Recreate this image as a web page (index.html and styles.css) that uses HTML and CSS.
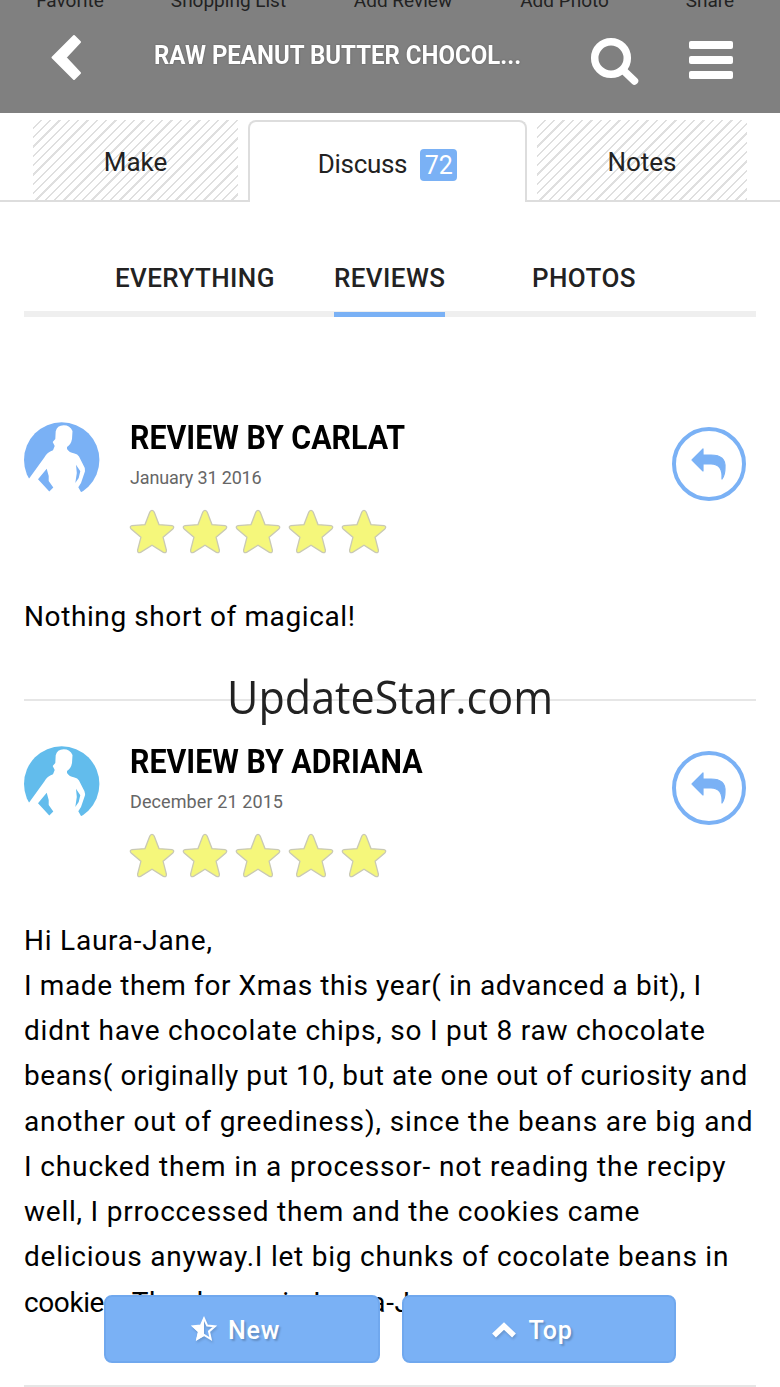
FILE: index.html
```
<!DOCTYPE html>
<html lang="en">
<head>
  <meta charset="UTF-8" />
  <title>Raw Peanut Butter Chocolate - Reviews</title>
  <meta name="viewport" content="width=device-width, initial-scale=1" />
  <link rel="stylesheet" href="styles.css">
</head>
<body>
  <svg width="0" height="0" class="defs">
    <defs>
      <symbol id="star" viewBox="0 0 46 46">
        <path d="M20.8 3.1Q23 -.3 25.2 3.1L30 15.6L43 16.7Q46 17.6 43.8 20L34.1 28.3L37.4 41.2Q37.5 44.6 34.4 43.4L23 36.3L11.6 43.4Q8.5 44.6 8.6 41.2L11.9 28.3L2.2 20Q0 17.6 3 16.7L16 15.6Z" fill="#f5f77b" stroke="#c9c9b4" stroke-width="1.3" />
      </symbol>
      <symbol id="person" viewBox="0 0 76 76">
        <circle cx="37.7" cy="38" r="37.7" />
        <path d="M39.7 3.3Q33 3.5 31.7 9.3L31.3 17L28.7 20L30.7 24L29 28.3Q23 30.5 20.5 35.3L5.5 56L0 62V76H76V70H57L54.3 65.3L57 61L61 49.3Q61.5 46 59.3 43L55 34.5Q53.5 32 50.5 31.5Q45 30.5 43 27L43 25Q47 22.5 48 17L48.5 9Q46 3.3 39.7 3.3Z" fill="#fff" />
        <path d="M14 57.3L22.7 46.7L24.7 54V59L29.3 65.5L25.3 69.5Z" />
        <path d="M52 42.7L56.3 49.3L54.7 56L51.3 61L52.8 51Z" />
      </symbol>
      <symbol id="reply" viewBox="0 0 36 32">
        <path d="M1 12L12 1V7H20Q35 7 34 20Q34 27 31 31Q32 16 20 16H12V23Z" stroke-width="1.2" stroke-linejoin="round" />
      </symbol>
    </defs>
  </svg>

  <div class="page">
    <header class="header">
      <div class="actions">
        <span>Favorite</span>
        <span>Shopping List</span>
        <span>Add Review</span>
        <span>Add Photo</span>
        <span>Share</span>
      </div>
      <div class="bar">
        <svg class="back" width="32" height="48" viewBox="0 0 32 48"><path d="M23 2L29 8L14.5 23.5L29 39L23 45L1.5 23.5Z" /></svg>
        <h1>RAW PEANUT BUTTER CHOCOL...</h1>
        <svg class="search" width="50" height="50" viewBox="0 0 50 50"><circle cx="21" cy="21" r="16.3" fill="none" stroke="#fff" stroke-width="7.5" /><path d="M33 33L44.5 44" stroke="#fff" stroke-width="7.5" stroke-linecap="round" /></svg>
        <div class="menu"><i></i><i></i><i></i></div>
      </div>
    </header>

    <nav class="tabs">
      <a class="tab make">Make</a>
      <a class="tab active"><span>Discuss</span><b class="badge">72</b></a>
      <a class="tab notes">Notes</a>
    </nav>

    <nav class="filters">
      <a class="everything">EVERYTHING</a>
      <a class="reviews selected">REVIEWS</a>
      <a class="photos">PHOTOS</a>
    </nav>

    <main>
      <article class="review">
        <div class="top">
          <svg class="avatar" fill="#7ab1f5"><use href="#person" /></svg>
          <div class="info">
            <h2>REVIEW BY CARLAT</h2>
            <time>January 31 2016</time>
            <div class="stars">
              <svg><use href="#star" /></svg><svg><use href="#star" /></svg><svg><use href="#star" /></svg><svg><use href="#star" /></svg><svg><use href="#star" /></svg>
            </div>
          </div>
          <button class="reply"><svg><use href="#reply" /></svg></button>
        </div>
        <p>Nothing short of magical!</p>
      </article>

      <article class="review">
        <div class="top">
          <svg class="avatar" fill="#62bcec"><use href="#person" /></svg>
          <div class="info">
            <h2>REVIEW BY ADRIANA</h2>
            <time class="long">December 21 2015</time>
            <div class="stars">
              <svg><use href="#star" /></svg><svg><use href="#star" /></svg><svg><use href="#star" /></svg><svg><use href="#star" /></svg><svg><use href="#star" /></svg>
            </div>
          </div>
          <button class="reply"><svg><use href="#reply" /></svg></button>
        </div>
        <p><span class="wide">Hi Laura-Jane,</span><br>
          I made them for Xmas this year( in advanced a bit), I<br>
          <span class="wide">didnt have chocolate chips, so I put 8 raw chocolate</span><br>
          beans( originally put 10, but ate one out of curiosity and<br>
          <span class="wider">another out of greediness), since the beans are big and</span><br>
          <span class="wider">I chucked them in a processor- not reading the recipy</span><br>
          <span class="wide">well, I prroccessed them and the cookies came</span><br>
          <span class="wide">delicious anyway.I let big chunks of cocolate beans in</span><br>
          <span class="tight">cookies. </span>Thanks again Laura-Jane</p>
      </article>
    </main>

    <div class="watermark">UpdateStar.com</div>

    <div class="floating">
      <button class="new"><svg width="26" height="26" viewBox="0 0 26 26"><path d="M13 2.5L16.2 9.6L23.8 10.3L18 15.4L19.7 23L13 19L6.3 23L8 15.4L2.2 10.3L9.8 9.6Z" fill="none" stroke="#fff" stroke-width="2" /><path d="M13 1V20L5 24.5L7 16L1 10L9.5 9.5Z" fill="#fff" /></svg>New</button>
      <button class="to-top"><svg width="26" height="18" viewBox="0 0 26 18"><path d="M3 14.5L13 5L23 14.5" fill="none" stroke="#fff" stroke-width="5.5" /></svg>Top</button>
    </div>
  </div>
</body>
</html>
```
FILE: styles.css
```
* {
  box-sizing: border-box;
}

body {
  margin: 0;
  font-family: Roboto, "Liberation Sans", sans-serif;
  background-color: #fff;
  color: #222;
}

.defs {
  position: absolute;
}

.page {
  position: relative;
  height: 1387px;
  overflow: hidden;
}

.header {
  height: 113px;
  background-color: #808080;
  overflow: hidden;
}

.actions {
  display: grid;
  grid-template-columns: 140px 177px 172px 151px 140px;
  height: 10px;
  text-align: center;
  font-size: 19px;
  line-height: 20px;
  white-space: nowrap;
}

.actions span {
  margin-top: -9px;
}

.bar {
  display: flex;
  align-items: flex-start;
  padding: 24px 47px 0 51px;
}

.back {
  fill: #fff;
  stroke: #fff;
  stroke-width: 2px;
  stroke-linejoin: round;
}

.bar h1 {
  width: 367px;
  margin: 5px 69px 0 71px;
  color: #fff;
  font-size: 26px;
  line-height: 32px;
  white-space: nowrap;
  transform-origin: left;
  transform: scaleX(0.923);
  text-shadow: 0 0 2px #555;
}

.search {
  margin-top: 3px;
}

.menu {
  display: flex;
  flex-direction: column;
  gap: 7px;
  margin: 7px 0 0 49px;
}

.menu i {
  width: 44px;
  height: 8px;
  border-radius: 2px;
  background-color: #fff;
}

.tabs {
  display: flex;
  height: 89px;
  padding: 7px 33px 0;
  background: linear-gradient(#ddd, #ddd) bottom / 100% 2px no-repeat;
}

.tab {
  display: flex;
  align-items: center;
  justify-content: center;
  height: 80px;
  font-size: 26px;
  padding-top: 4px;
}

.make,
.notes {
  background: repeating-linear-gradient(135deg, #fff 0 5.1px, #dfdfdf 5.1px 6.6px);
}

.make {
  width: 205px;
}

.notes {
  width: 210px;
}

.active {
  width: 279px;
  height: 82px;
  margin: 0 10px;
  border: 2px solid #ddd;
  border-bottom: 0;
  border-radius: 8px 8px 0 0;
  background-color: #fff;
  padding-top: 3px;
}

.active span {
  letter-spacing: -0.3px;
}

.badge {
  width: 37px;
  height: 32px;
  margin: 2px 0 0 13px;
  border-radius: 4px;
  background-color: #7ab1f5;
  color: #fff;
  font-size: 25px;
  font-weight: 400;
  line-height: 34px;
  text-align: center;
}

.filters {
  display: flex;
  margin: 55px 24px 0;
  height: 60px;
  padding-left: 91px;
  background: linear-gradient(#efefef, #efefef) bottom / 100% 6px no-repeat;
  font-size: 26px;
  font-weight: 500;
  line-height: 42px;
  letter-spacing: 0.4px;
}

.filters a {
  height: 60px;
  white-space: nowrap;
}

.everything {
  width: 160px;
}

.reviews {
  width: 111px;
  margin: 0 87px 0 59px;
}

.selected {
  border-bottom: 5px solid #7ab1f5;
}

main {
  padding: 60px 24px 0;
}

.review {
  padding: 45px 0 60.25px;
  border-bottom: 2px solid #e6e6e6;
}

.top {
  display: flex;
  height: 171.5px;
}

.avatar {
  width: 76px;
  height: 76px;
}

.info {
  flex: 1;
  margin-left: 30px;
}

.info h2 {
  margin: -1px 0 0;
  color: #000;
  font-size: 34px;
  line-height: 32px;
  white-space: nowrap;
  transform-origin: left;
  transform: scaleX(0.893);
}

.info time {
  display: block;
  margin-top: 14px;
  color: #666;
  font-size: 18px;
  line-height: 22px;
  letter-spacing: -0.15px;
}

.info .long {
  letter-spacing: 0.1px;
}

.stars {
  display: flex;
  gap: 7.2px;
  margin: 20px 0 0 -1.5px;
}

.stars svg {
  width: 46px;
  height: 46px;
}

.reply {
  display: flex;
  align-items: center;
  justify-content: center;
  width: 74px;
  height: 74px;
  margin: 5px 10px 0 0;
  padding: 0;
  border: 4px solid #7ab1f5;
  border-radius: 50%;
  background: none;
}

.reply svg {
  width: 36px;
  height: 32px;
  fill: #7ab1f5;
  stroke: #7ab1f5;
}

.review p {
  margin: 0;
  color: #000;
  font-size: 28px;
  line-height: 45.25px;
  letter-spacing: 0.6px;
  white-space: nowrap;
}

.review .wide {
  letter-spacing: 0.77px;
}

.review .wider {
  letter-spacing: 0.87px;
}

.review .tight {
  letter-spacing: -0.4px;
}

.watermark {
  position: absolute;
  left: 227px;
  top: 664px;
  font-family: "Open Sans", sans-serif;
  font-size: 46px;
  line-height: 64px;
  transform-origin: left;
  transform: scaleX(0.937);
}

.floating {
  position: absolute;
  left: 104px;
  top: 1295px;
  display: flex;
  gap: 22px;
}

.floating button {
  display: flex;
  align-items: center;
  justify-content: center;
  gap: 11px;
  height: 68px;
  padding: 2px 13px 0 0;
  border: 2px solid #70a8ee;
  border-radius: 8px;
  background-color: #7ab1f5;
  color: #fff;
  font-family: inherit;
  font-size: 25px;
  font-weight: 500;
  letter-spacing: 0.8px;
  text-shadow: 2px 2px 2px rgba(0,0,0,0.2);
}

.floating svg {
  margin-bottom: 3px;
  filter: drop-shadow(1px 2px 1px rgba(0,0,0,0.15));
}

.new {
  width: 276px;
}

.floating .to-top {
  width: 274px;
  padding-right: 14px;
}

.floating .to-top svg {
  margin-bottom: 0;
}
```
